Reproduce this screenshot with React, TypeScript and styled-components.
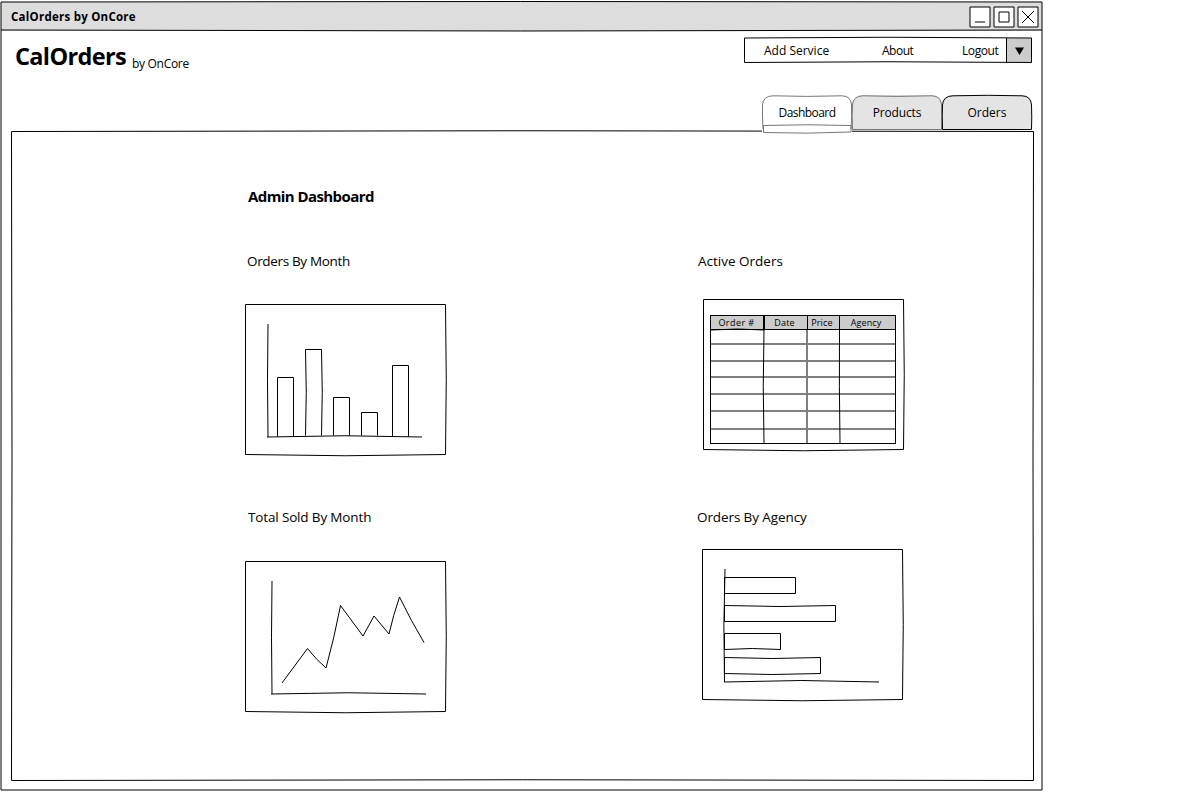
import React from "react";
import styled, { createGlobalStyle } from "styled-components";

const GlobalStyle = createGlobalStyle`
  * { box-sizing: border-box; }
  body { margin: 0; background: #fff; color: #000; font-family: "Open Sans", "Noto Sans", sans-serif; }
`;

const Window = styled.div`
  position: relative;
  display: flex;
  flex-direction: column;
  width: 1044px;
  height: 792px;
`;

/* Hand-drawn stroke laid over the element it decorates. */
const Sketch = styled.svg<{ $light?: boolean }>`
  position: absolute;
  inset: 0;
  width: 100%;
  height: 100%;
  overflow: visible;
  pointer-events: none;
  fill: none;
  stroke: ${(p) => (p.$light ? "#777" : "#000")};
  stroke-width: 1;
`;

const Text = styled.span<{ $size: number; $gap?: number; $bold?: boolean }>`
  position: relative;
  font-size: ${(p) => p.$size}px;
  letter-spacing: ${(p) => p.$gap ?? 0}px;
  font-weight: ${(p) => (p.$bold ? 700 : 400)};
  line-height: 20px;
  white-space: nowrap;
`;

const TitleBar = styled.header`
  position: relative;
  display: flex;
  align-items: center;
  justify-content: space-between;
  height: 29px;
  margin: 2px 2px 0 1px;
  padding: 0 4px 0 10px;
  background: #ddd;
`;

const WindowButtons = styled.div`
  position: relative;
  display: flex;
  gap: 2px;
  margin-right: -1px;
`;

const WindowButton = styled.svg`
  width: 22px;
  height: 22px;
  fill: #fff;
  stroke: #000;
  stroke-width: 1;
`;

const Masthead = styled.div`
  display: flex;
  justify-content: space-between;
  height: 64px;
  padding: 7px 12px 0 15px;
`;

const Brand = styled.div`
  display: flex;
  align-items: flex-start;
  gap: 6px;
  padding-top: 8px;
`;

const Byline = styled.div`
  display: flex;
  padding-top: 8px;
`;

const Nav = styled.nav`
  position: relative;
  display: flex;
  align-items: flex-start;
  width: 288px;
  height: 25px;
  padding-left: 20px;
`;

const NavItem = styled.a<{ $width: number }>`
  display: flex;
  width: ${(p) => p.$width}px;
  padding-top: 3px;
`;

const NavArrow = styled.div`
  display: flex;
  align-items: center;
  justify-content: center;
  width: 25px;
  height: 25px;
  margin-left: auto;
  background: #ccc;
`;

const Tabs = styled.div`
  position: relative;
  z-index: 1;
  display: flex;
  justify-content: flex-end;
  height: 36px;
  padding-right: 12px;
`;

const Tab = styled.div<{ $active?: boolean }>`
  position: relative;
  display: flex;
  justify-content: center;
  width: 90px;
  height: ${(p) => (p.$active ? 38 : 35)}px;
  padding-top: 8px;
  border-radius: 10px 10px 0 0;
  background: ${(p) => (p.$active ? "#fff" : "#e4e4e4")};
`;

const Panel = styled.main`
  position: relative;
  display: flex;
  flex-direction: column;
  width: 1023px;
  height: 650px;
  margin-left: 11px;
  padding: 55px 0 0 234px;
`;

const Columns = styled.div`
  display: flex;
  gap: 249px;
  margin-top: 45px;
`;

const Column = styled.div`
  display: flex;
  flex-direction: column;
  width: 202px;
`;

const Widget = styled.section<{ $height: number; $gap: number }>`
  display: flex;
  flex-direction: column;
  align-items: flex-start;
  gap: ${(p) => p.$gap}px;
  height: ${(p) => p.$height}px;
`;

const WidgetTitle = styled.h2<{ $indent: number }>`
  display: flex;
  height: 20px;
  margin: 0 0 0 ${(p) => p.$indent}px;
`;

const Frame = styled.div<{ $indent?: number }>`
  position: relative;
  width: 202px;
  height: 152px;
  margin-left: ${(p) => p.$indent ?? 0}px;
  padding: 16px 7px 7px;
`;

const Grid = styled.div`
  position: relative;
  width: 186px;
  height: 129px;
  border: 1px solid #000;
`;

const GridRow = styled.div<{ $height: number; $head?: boolean }>`
  display: grid;
  grid-template-columns: 53px 43px 32px 56px;
  grid-template-rows: 100%;
  height: ${(p) => p.$height}px;
  background: ${(p) => (p.$head ? "#ccc" : "transparent")};
  border-bottom: ${(p) => (p.$head ? "1px solid #000" : "2px solid #808080")};
  &:last-of-type { border-bottom: 0; }
`;

const GridCell = styled.div`
  display: flex;
  align-items: center;
  justify-content: center;
  padding-right: 2px;
`;

const CardOutline = () => (
  <path d="M.5 .5H200.5Q202 75 200.5 150.5Q100 153 .5 150.5Z" />
);

const rows = [15, 17, 16, 17, 17, 18, 13];
const columns: [string, number][] = [
  ["Order #", 0.45],
  ["Date", 0.2],
  ["Price", 0.2],
  ["Agency", 0.1],
];

function OrdersTable() {
  return (
    <Frame $indent={7}>
      <Sketch><CardOutline /></Sketch>
      <Grid>
        <GridRow $height={14} $head>
          {columns.map(([name, gap]) => (
            <GridCell key={name}><Text $size={9} $gap={gap}>{name}</Text></GridCell>
          ))}
        </GridRow>
        {rows.map((h, i) => <GridRow key={i} $height={h} />)}
        <Sketch>
          <path d="M52.5 0V14M53.5 0V14M96.5 0V14M128.5 0V14M0 14Q26 12 53 14" />
          <path d="M53 14Q51.5 70 53 127M128.5 14Q128 70 129 127" />
          <path d="M96 14V127" stroke="#808080" strokeWidth="2" />
        </Sketch>
      </Grid>
    </Frame>
  );
}

export default function App() {
  return (
    <>
      <GlobalStyle />
      <Window>
        <TitleBar>
          <Text $size={11.5} $gap={0.25} $bold>CalOrders by OnCore</Text>
          <WindowButtons>
            <WindowButton><path d="M1 1H21V21H1Z" /><path d="M6 16H16" /></WindowButton>
            <WindowButton><path d="M1 1H21V21H1Z" /><path d="M6 6H16V16H6Z" /></WindowButton>
            <WindowButton><path d="M1 1H21V21H1Z" /><path d="M5 5L17 17M17 5L5 17" /></WindowButton>
          </WindowButtons>
        </TitleBar>
        <Masthead>
          <Brand>
            <Text $size={23.5} $gap={-0.65} $bold>CalOrders</Text>
            <Byline><Text $size={12} $gap={-0.3}>by OnCore</Text></Byline>
          </Brand>
          <Nav>
            <NavItem $width={118}><Text $size={12}>Add Service</Text></NavItem>
            <NavItem $width={80}><Text $size={12} $gap={-0.5}>About</Text></NavItem>
            <NavItem $width={40}><Text $size={12} $gap={-0.4}>Logout</Text></NavItem>
            <NavArrow>
              <svg width="9" height="8"><path d="M0 .5H9L4.5 8Z" /></svg>
            </NavArrow>
            <Sketch>
              <path d="M.5 0Q144 -1.5 287.5 0V24.5Q144 23 .5 24.5ZM262.5 0V24.5" />
            </Sketch>
          </Nav>
        </Masthead>
        <Tabs>
          <Tab $active>
            <Sketch $light>
              <path d="M1 34Q.2 20 .5 10Q1 1 11 .8Q45 2 80 .8Q89 1 89.5 10Q90 22 89 34" />
              <path d="M1.500 30.500Q45 29 89 30.500V37Q45 39 1.500 37.500Z" />
            </Sketch>
            <Text $size={12} $gap={-0.55}>Dashboard</Text>
          </Tab>
          <Tab>
            <Sketch $light>
              <path d="M.5 34.5Q-.2 20 .5 10Q1 1 11 .8Q45 2 80 .8Q89 1 89.5 10Q90 22 89.5 34.5Z" />
            </Sketch>
            <Text $size={12} $gap={-0.15}>Products</Text>
          </Tab>
          <Tab>
            <Sketch>
              <path d="M.5 34.5Q0 20 .5 10Q1 1 11 .8Q45 -.2 80 .8Q89 1 89.5 10Q90 22 89.5 34.5Z" />
            </Sketch>
            <Text $size={12}>Orders</Text>
          </Tab>
        </Tabs>
        <Panel>
          <Sketch><path d="M.5 .5Q511 -1 1022.5 .5Q1021.5 325 1022.5 649.5Q511 648 .5 649.5Q1.5 325 .5 .5Z" /></Sketch>
          <WidgetTitle as="h1" $indent={3}><Text $size={15} $gap={-0.58} $bold>Admin Dashboard</Text></WidgetTitle>
          <Columns>
            <Column>
              <Widget $height={256} $gap={33}>
                <WidgetTitle $indent={2}><Text $size={13.5} $gap={-0.34}>Orders By Month</Text></WidgetTitle>
                <Frame>
                  <Sketch>
                    <CardOutline />
                    <path d="M23 20Q22 76 23 133M22 133Q100 130.5 177 133" />
                    <path d="M32.5 132.5V73.5H48.5V132.5M60.5 131.5Q62 88 60.5 45.5H76.5Q78 88 76.5 131.5M88.5 131.5V93.5H104.5V131.5M116.5 131.5V108.5H132.5V131.5M147.5 132.5V61.5H163.5V132.5" />
                  </Sketch>
                </Frame>
              </Widget>
              <Widget $height={210} $gap={34}>
                <WidgetTitle $indent={3}><Text $size={13.5} $gap={-0.15}>Total Sold By Month</Text></WidgetTitle>
                <Frame>
                  <Sketch>
                    <CardOutline />
                    <path d="M27 20Q26 76 27 133M26 133Q104 130.5 181 133" />
                    <path d="M37 122L62.5 87.5Q71 98.5 81 107Q89.500 76 95.5 44.5L118 75L129 55L144 73Q148 55 154.5 36Q166 60 179 81.5" />
                  </Sketch>
                </Frame>
              </Widget>
            </Column>
            <Column>
              <Widget $height={256} $gap={28}>
                <WidgetTitle $indent={2}><Text $size={13.5}>Active Orders</Text></WidgetTitle>
                <OrdersTable />
              </Widget>
              <Widget $height={210} $gap={22}>
                <WidgetTitle $indent={1}><Text $size={13.5} $gap={-0.1}>Orders By Agency</Text></WidgetTitle>
                <Frame $indent={6}>
                  <Sketch>
                    <CardOutline />
                    <path d="M23 20Q21 76 22.5 133M22 133Q100 130 177 133" />
                    <path d="M22.5 28.5H93.5V44.5H22.5ZM22.5 56.5Q78 58.5 133.5 56.5V72.5H22.5ZM22.5 84.5H78.5V100.5Q50 98.5 22.5 100.5ZM22.5 108.5Q70 110.5 118.5 108.5V124.5Q70 126.5 22.5 124.5Z" />
                  </Sketch>
                </Frame>
              </Widget>
            </Column>
          </Columns>
        </Panel>
        <Sketch>
          <path d="M1 2Q520 1 1042 2V790H1Z M1 30Q520 32 1042 30" />
        </Sketch>
      </Window>
    </>
  );
}
